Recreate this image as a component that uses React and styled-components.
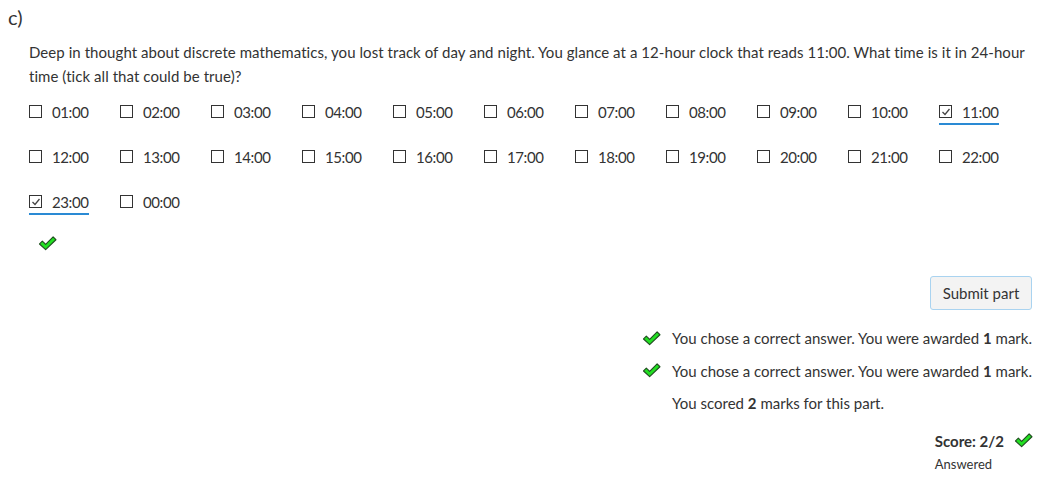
import React from "react";
import styled, { createGlobalStyle } from "styled-components";

const Global = createGlobalStyle`
  html, body { margin: 0; padding: 0; background: #fff; }
  body {
    font-family: Lato, "Liberation Sans", sans-serif;
    color: #333;
    font-size: 15px;
  }
`;

const Page = styled.div`
  padding: 4px 10px 0 8px;
`;

const PartLabel = styled.div`
  font-size: 20px;
  line-height: 26px;
`;

const Content = styled.div`
  margin-left: 21px;
`;

const Prompt = styled.p`
  margin: 10px 0 0;
  line-height: 24px;
  font-size: 15px;
  letter-spacing: 0.06px;
`;

const Choices = styled.div`
  display: grid;
  grid-template-columns: repeat(11, 91px);
  grid-auto-rows: 45px;
  margin-top: 1px;
`;

const Choice = styled.label`
  display: flex;
  align-items: center;
`;

const ChoiceInner = styled.span`
  display: inline-flex;
  align-items: center;
  gap: 10px;
  height: 22px;
  border-bottom: 2px solid ${(p) => (p.$checked ? "#2a8ad4" : "transparent")};
  margin-top: 2px;
`;

const Box = styled.span`
  width: 11px;
  height: 11px;
  border: 1px solid #333;
  display: inline-flex;
  align-items: center;
  justify-content: center;
  background: #fff;
`;

const ChoiceText = styled.span`
  font-size: 15px;
  letter-spacing: -0.4px;
`;

const Tick = ({ size = 19 }) => (
  <svg width={size} height={Math.round(size * 0.8)} viewBox="0 0 20 16">
    <polygon
      points="1.5,8.5 4.5,5.5 8,9 16,1 19,4 8,14.5"
      fill="#22e022"
      stroke="#1f4d1f"
      strokeWidth="1.2"
      strokeLinejoin="round"
    />
  </svg>
);

const BoxTick = () => (
  <svg width="10" height="10" viewBox="0 0 10 10">
    <polyline points="1.5,5 4,7.5 8.5,2" fill="none" stroke="#444" strokeWidth="1.3" />
  </svg>
);

const Verdict = styled.div`
  margin: 12px 0 0 9px;
  height: 18px;
`;

const Actions = styled.div`
  display: flex;
  justify-content: flex-end;
  margin-top: 22px;
`;

const SubmitButton = styled.button`
  font-family: inherit;
  font-size: 15px;
  color: #333;
  height: 34px;
  width: 102px;
  padding: 0;
  background: #f3f3f3;
  border: 1px solid #a9d3f0;
  border-radius: 3px;
`;

const FeedbackWrap = styled.div`
  display: flex;
  justify-content: flex-end;
  margin-top: 12px;
`;

const FeedbackList = styled.ul`
  list-style: none;
  margin: 0;
  padding: 0;
`;

const FeedbackItem = styled.li`
  display: flex;
  align-items: center;
  height: 32.5px;
  gap: 11px;
  white-space: nowrap;
  padding-left: ${(p) => (p.$noIcon ? "30px" : "0")};
`;

const ScoreWrap = styled.div`
  display: flex;
  justify-content: flex-end;
  margin-top: 9px;
  margin-right: -1px;
`;

const ScoreBox = styled.div`
  white-space: nowrap;
`;

const ScoreLine = styled.div`
  display: flex;
  align-items: center;
  gap: 10px;
  font-weight: bold;
  height: 24px;
`;

const Status = styled.div`
  font-size: 13px;
  line-height: 18px;
  margin-top: 2px;
`;

const times = [
  "01:00","02:00","03:00","04:00","05:00","06:00","07:00","08:00","09:00","10:00","11:00",
  "12:00","13:00","14:00","15:00","16:00","17:00","18:00","19:00","20:00","21:00","22:00",
  "23:00","00:00",
];
const checked = new Set(["11:00", "23:00"]);

export default function App() {
  return (
    <>
      <Global />
      <Page>
        <PartLabel>c)</PartLabel>
        <Content>
          <Prompt>
            Deep in thought about discrete mathematics, you lost track of day and night. You glance at a
            12-hour clock that reads 11:00. What time is it in 24-hour time (tick all that could be true)?
          </Prompt>
          <Choices>
            {times.map((t) => (
              <Choice key={t}>
                <ChoiceInner $checked={checked.has(t)}>
                  <Box>{checked.has(t) && <BoxTick />}</Box>
                  <ChoiceText>{t}</ChoiceText>
                </ChoiceInner>
              </Choice>
            ))}
          </Choices>
          <Verdict>
            <Tick />
          </Verdict>
        </Content>
        <Actions>
          <SubmitButton>Submit part</SubmitButton>
        </Actions>
        <FeedbackWrap>
          <FeedbackList>
            <FeedbackItem>
              <Tick />
              <span>You chose a correct answer. You were awarded <b>1</b> mark.</span>
            </FeedbackItem>
            <FeedbackItem>
              <Tick />
              <span>You chose a correct answer. You were awarded <b>1</b> mark.</span>
            </FeedbackItem>
            <FeedbackItem $noIcon>
              <span>You scored <b>2</b> marks for this part.</span>
            </FeedbackItem>
          </FeedbackList>
        </FeedbackWrap>
        <ScoreWrap>
          <ScoreBox>
            <ScoreLine>
              <span>Score: 2/2</span>
              <Tick />
            </ScoreLine>
            <Status>Answered</Status>
          </ScoreBox>
        </ScoreWrap>
      </Page>
    </>
  );
}
